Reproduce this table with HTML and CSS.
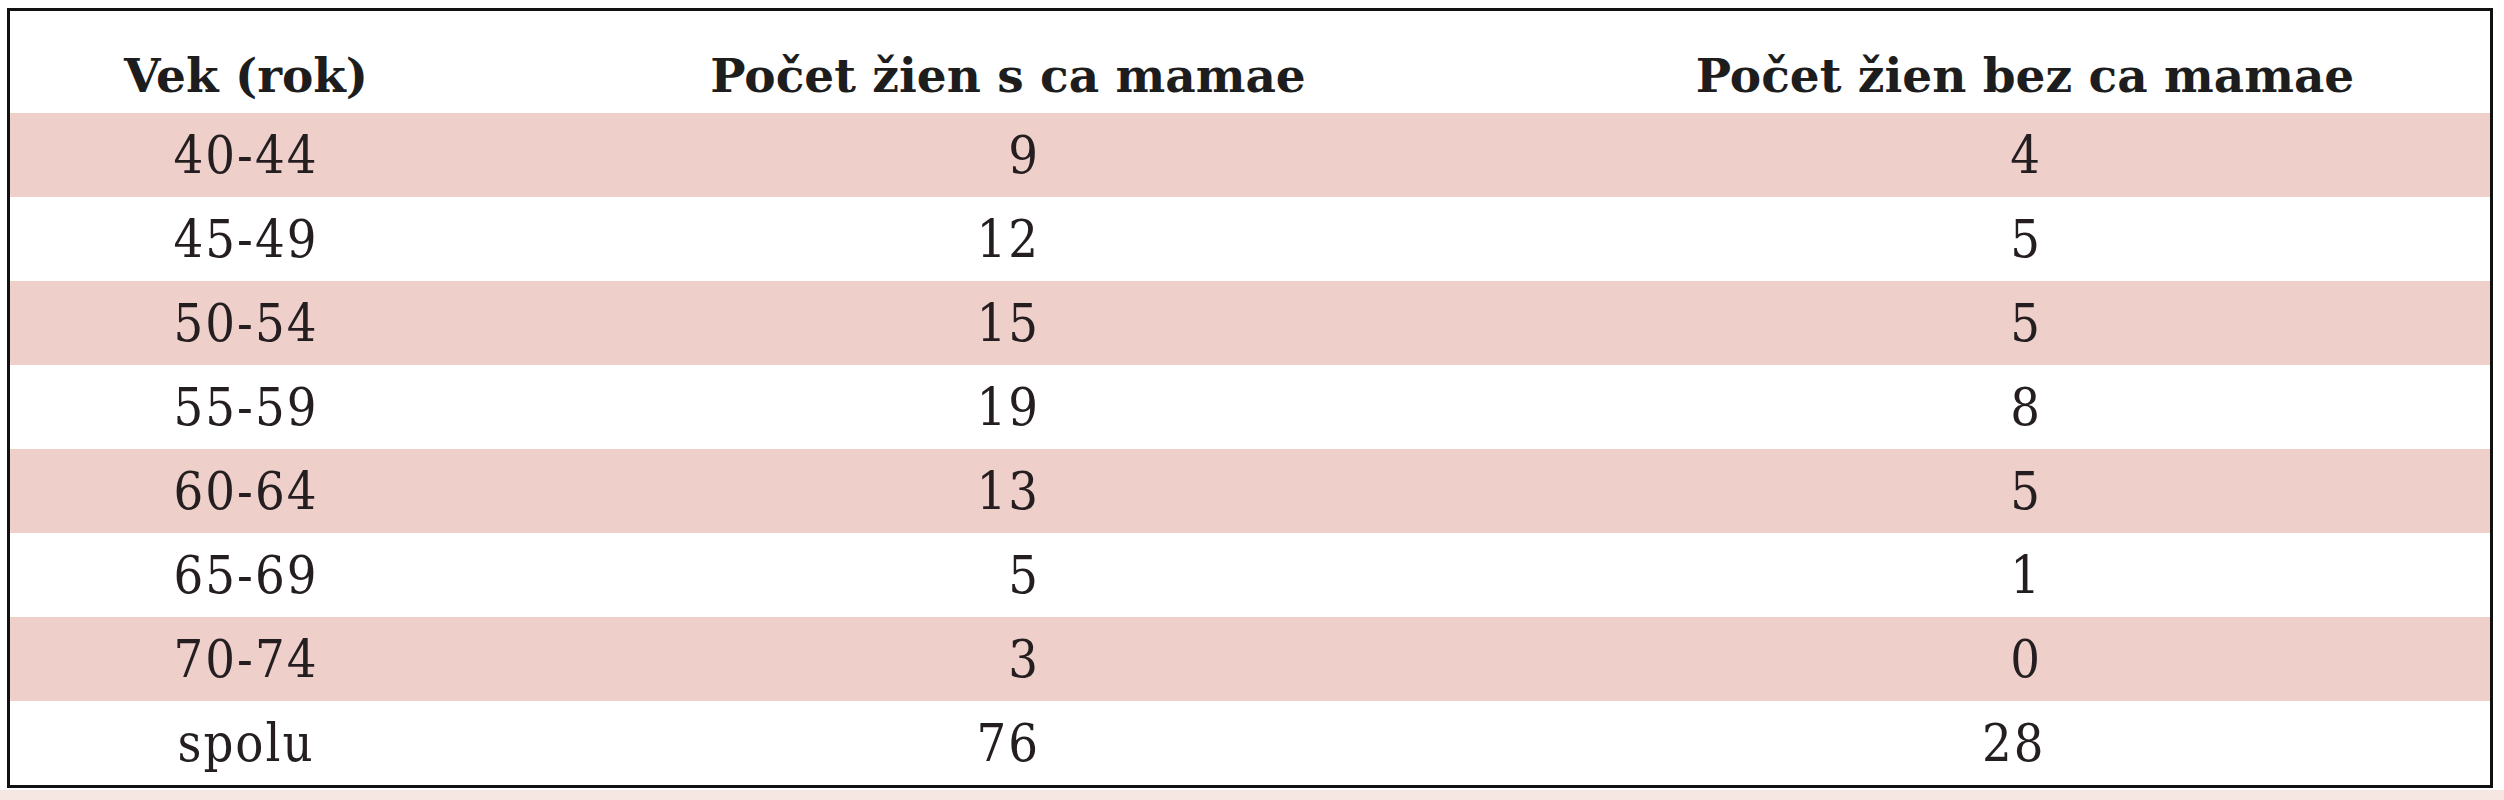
FILE: index.html
```html
<!DOCTYPE html>
<html lang="sk">
<head>
<meta charset="utf-8">
<title>Vek a počet žien</title>
<link rel="stylesheet" href="styles.css">
</head>
<body>
<div class="page">
  <div class="table">
    <div class="row head">
      <div class="cell c1">Vek (rok)</div>
      <div class="cell c2">Počet žien s ca mamae</div>
      <div class="cell c3">Počet žien bez ca mamae</div>
    </div>
    <div class="row pink">
      <div class="cell c1">40-44</div>
      <div class="cell c2"><span class="num">9</span></div>
      <div class="cell c3"><span class="num">4</span></div>
    </div>
    <div class="row">
      <div class="cell c1">45-49</div>
      <div class="cell c2"><span class="num">12</span></div>
      <div class="cell c3"><span class="num">5</span></div>
    </div>
    <div class="row pink">
      <div class="cell c1">50-54</div>
      <div class="cell c2"><span class="num">15</span></div>
      <div class="cell c3"><span class="num">5</span></div>
    </div>
    <div class="row">
      <div class="cell c1">55-59</div>
      <div class="cell c2"><span class="num">19</span></div>
      <div class="cell c3"><span class="num">8</span></div>
    </div>
    <div class="row pink">
      <div class="cell c1">60-64</div>
      <div class="cell c2"><span class="num">13</span></div>
      <div class="cell c3"><span class="num">5</span></div>
    </div>
    <div class="row">
      <div class="cell c1">65-69</div>
      <div class="cell c2"><span class="num">5</span></div>
      <div class="cell c3"><span class="num">1</span></div>
    </div>
    <div class="row pink">
      <div class="cell c1">70-74</div>
      <div class="cell c2"><span class="num">3</span></div>
      <div class="cell c3"><span class="num">0</span></div>
    </div>
    <div class="row">
      <div class="cell c1">spolu</div>
      <div class="cell c2"><span class="num">76</span></div>
      <div class="cell c3"><span class="num">28</span></div>
    </div>
  </div>
  <div class="tail"></div>
</div>
</body>
</html>
```
FILE: styles.css
```css
html, body {
  margin: 0;
  padding: 0;
  background: #ffffff;
}

.page {
  width: 2504px;
  height: 800px;
  padding: 8px 11px 0 7px;
  box-sizing: border-box;
  display: flex;
  flex-direction: column;
}

.table {
  border: 3px solid #111111;
  display: flex;
  flex-direction: column;
  font-family: "DejaVu Serif Condensed", "DejaVu Serif", "Liberation Serif", serif;
  color: #241e20;
}

.row {
  display: grid;
  grid-template-columns: 472px 1052px 1fr;
  height: 84px;
  align-items: center;
}

.row.pink {
  background: #efcfca;
}

.row.head {
  height: 102px;
  align-items: end;
  color: #1d1d1d;
}

.cell {
  text-align: center;
  font-size: 52px;
  letter-spacing: 2px;
  line-height: 1;
}

.head .cell {
  font-family: "DejaVu Serif", "Liberation Serif", serif;
  font-weight: bold;
  font-size: 47px;
  letter-spacing: 0;
  padding-bottom: 14px;
}

.head .c3 {
  padding-left: 26px;
}

.num {
  display: inline-block;
  width: 64px;
  text-align: right;
}

.c3 .num {
  width: 60px;
}

.tail {
  flex: 1;
  margin-left: -7px;
  margin-right: -11px;
  margin-top: 2px;
  background: #f7e7e3;
}
```
